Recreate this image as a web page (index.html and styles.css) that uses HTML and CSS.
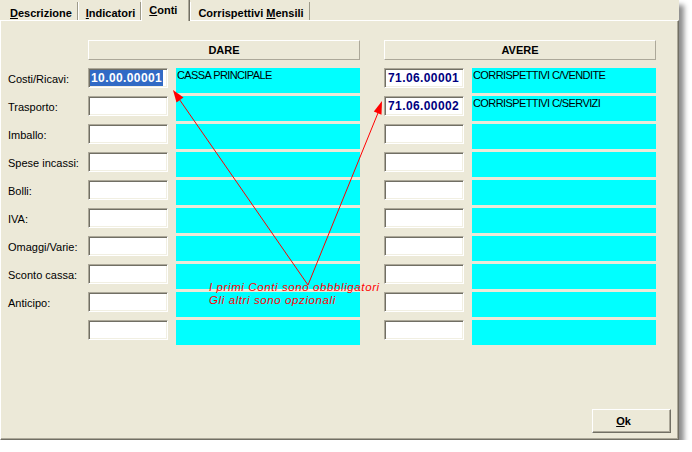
FILE: index.html
```html
<!DOCTYPE html>
<html lang="it">
<head>
<meta charset="utf-8">
<title>Conti</title>
<link rel="stylesheet" href="styles.css">
</head>
<body>
<div class="window">
  <div class="tabs">
    <div class="tab tab-first"><u>D</u>escrizione</div>
    <div class="tab"><u>I</u>ndicatori</div>
    <div class="tab tab-active"><u>C</u>onti</div>
    <div class="tab">Corrispettivi <u>M</u>ensili</div>
  </div>
  <div class="panel">
    <div class="grid">
      <div class="head-spacer"></div>
      <div class="head">DARE</div>
      <div class="head-gap"></div>
      <div class="head">AVERE</div>

      <div class="label">Costi/Ricavi:</div>
      <div class="code"><span class="sel">10.00.00001</span></div>
      <div class="desc">CASSA PRINCIPALE</div>
      <div></div>
      <div class="code navy">71.06.00001</div>
      <div class="desc">CORRISPETTIVI C/VENDITE</div>

      <div class="label">Trasporto:</div>
      <div class="code"></div>
      <div class="desc"></div>
      <div></div>
      <div class="code navy">71.06.00002</div>
      <div class="desc">CORRISPETTIVI C/SERVIZI</div>

      <div class="label">Imballo:</div>
      <div class="code"></div><div class="desc"></div><div></div><div class="code"></div><div class="desc"></div>

      <div class="label">Spese incassi:</div>
      <div class="code"></div><div class="desc"></div><div></div><div class="code"></div><div class="desc"></div>

      <div class="label">Bolli:</div>
      <div class="code"></div><div class="desc"></div><div></div><div class="code"></div><div class="desc"></div>

      <div class="label">IVA:</div>
      <div class="code"></div><div class="desc"></div><div></div><div class="code"></div><div class="desc"></div>

      <div class="label">Omaggi/Varie:</div>
      <div class="code"></div><div class="desc"></div><div></div><div class="code"></div><div class="desc"></div>

      <div class="label">Sconto cassa:</div>
      <div class="code"></div><div class="desc"></div><div></div><div class="code"></div><div class="desc"></div>

      <div class="label">Anticipo:</div>
      <div class="code"></div><div class="desc"></div><div></div><div class="code"></div><div class="desc"></div>

      <div class="label"></div>
      <div class="code"></div><div class="desc"></div><div></div><div class="code"></div><div class="desc"></div>
    </div>
    <div class="footer">
      <div class="btn-ok"><u>O</u>k</div>
    </div>
  </div>

  <svg class="annot" width="679" height="440" viewBox="0 0 679 440">
    <line x1="308" y1="285" x2="177" y2="96" stroke="#ff0000" stroke-width="1"/>
    <line x1="308" y1="285" x2="380" y2="108" stroke="#ff0000" stroke-width="1"/>
    <polygon points="173,90 176.5,102.5 183.5,97.5" fill="#ff0000"/>
    <polygon points="382,101 373.8,111.6 381.5,114.8" fill="#ff0000"/>
  </svg>
  <div class="note">
    <div class="note-line">I primi Conti sono obbbligatori</div>
    <div class="note-line">Gli altri sono opzionali</div>
  </div>
</div>
</body>
</html>
```

FILE: styles.css
```css
html, body {
  margin: 0;
  padding: 0;
  background: #ffffff;
}

body {
  font-family: "Liberation Sans", Arial, sans-serif;
  font-size: 11px;
  color: #000;
}

.window {
  position: relative;
  width: 679px;
  height: 440px;
  background: #ECE9D8;
  box-shadow: 5px 5px 5px rgba(0, 0, 0, 0.45);
  display: flex;
  flex-direction: column;
}

/* Tabs */
.tabs {
  height: 20px;
  display: flex;
  align-items: flex-start;
  padding-left: 2px;
  position: relative;
  z-index: 2;
}

.tab {
  margin-top: 2px;
  height: 18px;
  box-sizing: border-box;
  padding: 5px 5px 0 7px;
  line-height: 13px;
  font-weight: bold;
  white-space: nowrap;
  border-left: 1px solid #ffffff;
  border-right: 1px solid #9d9a89;
}

.tab-first {
  border-left-color: transparent;
}

.tab-active {
  margin-top: 0;
  height: 21px;
  padding: 4px 12px 0 7px;
  background: #ECE9D8;
  border-left: 1px solid #ffffff;
  border-right: 1px solid #716F64;
  box-shadow: inset -1px 0 0 #ACA899;
}

/* Panel */
.panel {
  flex: 1;
  box-sizing: border-box;
  border-top: 1px solid #ffffff;
  border-left: 1px solid #ffffff;
  border-right: 1px solid #716F64;
  border-bottom: 1px solid #716F64;
  box-shadow: inset -1px -1px 0 #ACA899;
  padding: 19px 7px 6px 7px;
  display: flex;
  flex-direction: column;
}

.grid {
  display: grid;
  grid-template-columns: 80px 88px 184px 24px 88px 184px;
  grid-auto-rows: 25px;
  row-gap: 3px;
}

.head-spacer, .head-gap {
  height: 20px;
  margin-bottom: 12px;
}

.head {
  grid-column: span 2;
  height: 20px;
  margin-bottom: 12px;
  box-sizing: border-box;
  border: 1px solid;
  border-color: #ffffff #ACA899 #ACA899 #ffffff;
  text-align: center;
  font-weight: bold;
  line-height: 18px;
}

.label {
  line-height: 22px;
  white-space: nowrap;
}

.code {
  width: 80px;
  height: 20px;
  box-sizing: border-box;
  background: #ffffff;
  border: 1px solid;
  border-color: #ACA899 #ffffff #ffffff #ACA899;
  box-shadow: inset 1px 1px 0 #716F64, inset -1px -1px 0 #F1EFE2;
  padding: 1px 0 0 2px;
  font-weight: bold;
  font-size: 12px;
  letter-spacing: 0.4px;
  line-height: 16px;
  white-space: nowrap;
  overflow: hidden;
}

.navy {
  color: #000080;
  padding-left: 3px;
}

.sel {
  display: inline-block;
  margin-left: -1px;
  padding: 0 1px 0 1px;
  background: #316AC5;
  color: #ffffff;
  line-height: 16px;
}

.desc {
  background: #00FFFF;
  padding: 1px 0 0 1px;
  line-height: 13px;
  letter-spacing: -0.6px;
  white-space: nowrap;
}

/* Footer */
.footer {
  margin-top: auto;
  display: flex;
  justify-content: flex-end;
}

.btn-ok {
  width: 79px;
  height: 24px;
  box-sizing: border-box;
  border: 1px solid;
  border-color: #ffffff #716F64 #716F64 #ffffff;
  box-shadow: inset -1px -1px 0 #ACA899;
  text-align: center;
  padding-right: 16px;
  line-height: 22px;
  font-weight: bold;
}

/* Annotation overlay */
.annot {
  position: absolute;
  left: 0;
  top: 0;
  pointer-events: none;
}

.note {
  position: absolute;
  left: 209px;
  top: 281px;
  color: #ff0000;
  font-style: italic;
  font-size: 11.5px;
  letter-spacing: 0.6px;
  line-height: 13px;
  white-space: nowrap;
}
```
